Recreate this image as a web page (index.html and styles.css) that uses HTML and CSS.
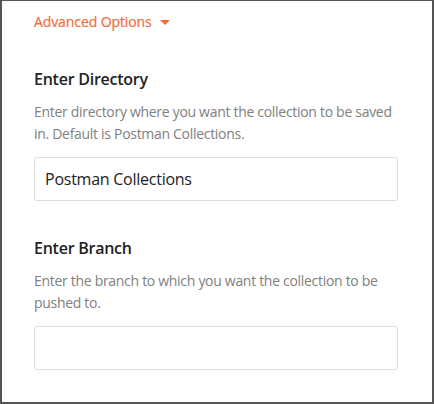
FILE: index.html
```html
<!DOCTYPE html>
<html lang="en">
<head>
    <meta charset="UTF-8">
    <title>Advanced Options</title>
    <link rel="stylesheet" href="styles.css">
</head>
<body>
    <div class="panel">
        <a class="toggle" href="#">Advanced Options <span class="caret"></span></a>

        <div class="field">
            <h3>Enter Directory</h3>
            <p>Enter directory where you want the collection to be saved in. Default is Postman Collections.</p>
            <input type="text" class="input" value="Postman Collections">
        </div>

        <div class="field">
            <h3>Enter Branch</h3>
            <p>Enter the branch to which you want the collection to be pushed to.</p>
            <input type="text" class="input" value="">
        </div>
    </div>
</body>
</html>
```

FILE: styles.css
```css
html, body { margin: 0; padding: 0; }
body { font-family: "Open Sans", Arial, sans-serif; background: #fff; }
.panel { box-sizing: border-box; width: 434px; height: 404px; border: 2px solid #555; border-top-width: 1px; padding: 9px 34px 0 32px; overflow: hidden; }
.toggle { display: inline-flex; align-items: center; gap: 8px; color: #f26b3a; font-size: 14px; line-height: 20px; letter-spacing: -0.1px; text-decoration: none; -webkit-text-stroke: 0.2px #f26b3a; }
.caret { width: 0; height: 0; border-left: 5px solid transparent; border-right: 5px solid transparent; border-top: 5px solid #f26b3a; margin-top: 1px; }
.field { margin-top: 36px; }
.field h3 { margin: 0; font-size: 16px; font-weight: 600; line-height: 22px; letter-spacing: -0.25px; color: #222; }
.field p { margin: 11px 0 0; font-size: 14px; line-height: 22px; letter-spacing: -0.3px; color: #808080; }
.input { display: block; box-sizing: border-box; width: 100%; height: 44px; margin-top: 12px; padding: 0 10px; border: 1px solid #ddd; border-radius: 3px; font-family: inherit; font-size: 16px; letter-spacing: -0.25px; color: #222; outline: none; }
```
